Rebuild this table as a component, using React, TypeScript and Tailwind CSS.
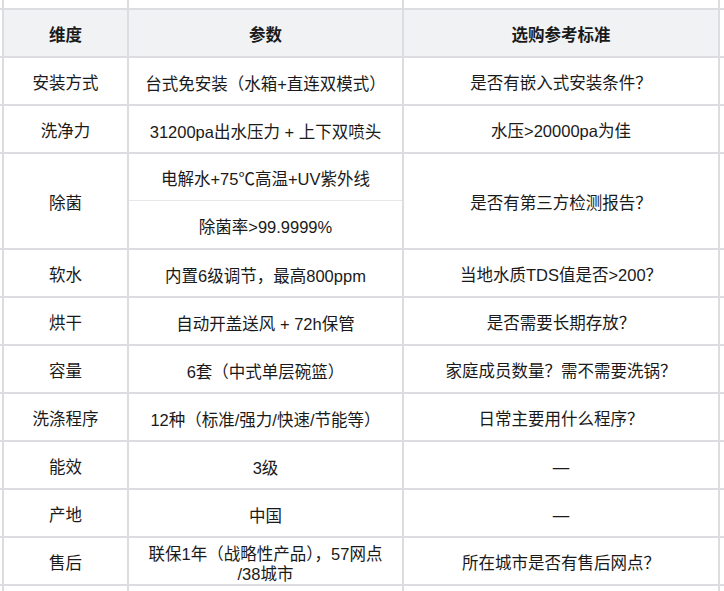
import React from 'react';

type Row = {
  dim: string
  params: string[]
  tip: string
}

const rows: Row[] = [
  { dim: '安装方式', params: ['台式免安装（水箱+直连双模式）'], tip: '是否有嵌入式安装条件？' },
  { dim: '洗净力', params: ['31200pa出水压力 + 上下双喷头'], tip: '水压>20000pa为佳' },
  { dim: '除菌', params: ['电解水+75℃高温+UV紫外线', '除菌率>99.9999%'], tip: '是否有第三方检测报告？' },
  { dim: '软水', params: ['内置6级调节，最高800ppm'], tip: '当地水质TDS值是否>200？' },
  { dim: '烘干', params: ['自动开盖送风 + 72h保管'], tip: '是否需要长期存放？' },
  { dim: '容量', params: ['6套（中式单层碗篮）'], tip: '家庭成员数量？需不需要洗锅？' },
  { dim: '洗涤程序', params: ['12种（标准/强力/快速/节能等）'], tip: '日常主要用什么程序？' },
  { dim: '能效', params: ['3级'], tip: '—' },
  { dim: '产地', params: ['中国'], tip: '—' },
  { dim: '售后', params: ['联保1年（战略性产品），57网点\n/38城市'], tip: '所在城市是否有售后网点？' },
]

const cell = 'bg-white flex items-center justify-center text-center pt-[5px]'

export default function App() {
  return (
    <div
      className="w-[724px] h-[591px] overflow-hidden bg-white text-[16.5px] text-[#1a1a1a]"
      style={{ fontFamily: '"Liberation Sans", "Noto Sans CJK SC", sans-serif' }}
    >
      <div className="grid grid-cols-[2px_123px_273px_314px_4px] gap-[2px] bg-[#dcdde1]">
        {/* partial row above */}
        <div className="bg-white h-[8px]" />
        <div className="bg-white h-[8px]" />
        <div className="bg-white h-[8px]" />
        <div className="bg-white h-[8px]" />
        <div className="bg-white h-[8px]" />

        {/* header */}
        <div className="bg-white h-[46px]" />
        <div className="bg-[#f1f2f4] h-[46px] flex items-center justify-center pt-[5px] font-bold">维度</div>
        <div className="bg-[#f1f2f4] h-[46px] flex items-center justify-center pt-[5px] font-bold">参数</div>
        <div className="bg-[#f1f2f4] h-[46px] flex items-center justify-center pt-[5px] font-bold">选购参考标准</div>
        <div className="bg-white h-[46px]" />

        {rows.map((r) => {
          const h = r.params.length > 1 ? 'h-[94px]' : 'h-[46px]'
          return (
            <React.Fragment key={r.dim}>
              <div className={`bg-white ${h}`} />
              <div className={`${cell} ${h}`}>{r.dim}</div>
              {r.params.length > 1 ? (
                <div className={`bg-white ${h} flex flex-col`}>
                  <div className="h-[47px] flex items-center justify-center pt-[4px] border-b border-[#e6e7ea]">{r.params[0]}</div>
                  <div className="h-[47px] flex items-center justify-center pt-[5px]">{r.params[1]}</div>
                </div>
              ) : (
                <div className={`${cell} ${h} whitespace-pre-line leading-[20px]`}>{r.params[0]}</div>
              )}
              <div className={`${cell} ${h}`}>{r.tip}</div>
              <div className={`bg-white ${h}`} />
            </React.Fragment>
          )
        })}

        {/* partial row below */}
        <div className="bg-white h-[5px]" />
        <div className="bg-white h-[5px]" />
        <div className="bg-white h-[5px]" />
        <div className="bg-white h-[5px]" />
        <div className="bg-white h-[5px]" />
      </div>
    </div>
  )
}
